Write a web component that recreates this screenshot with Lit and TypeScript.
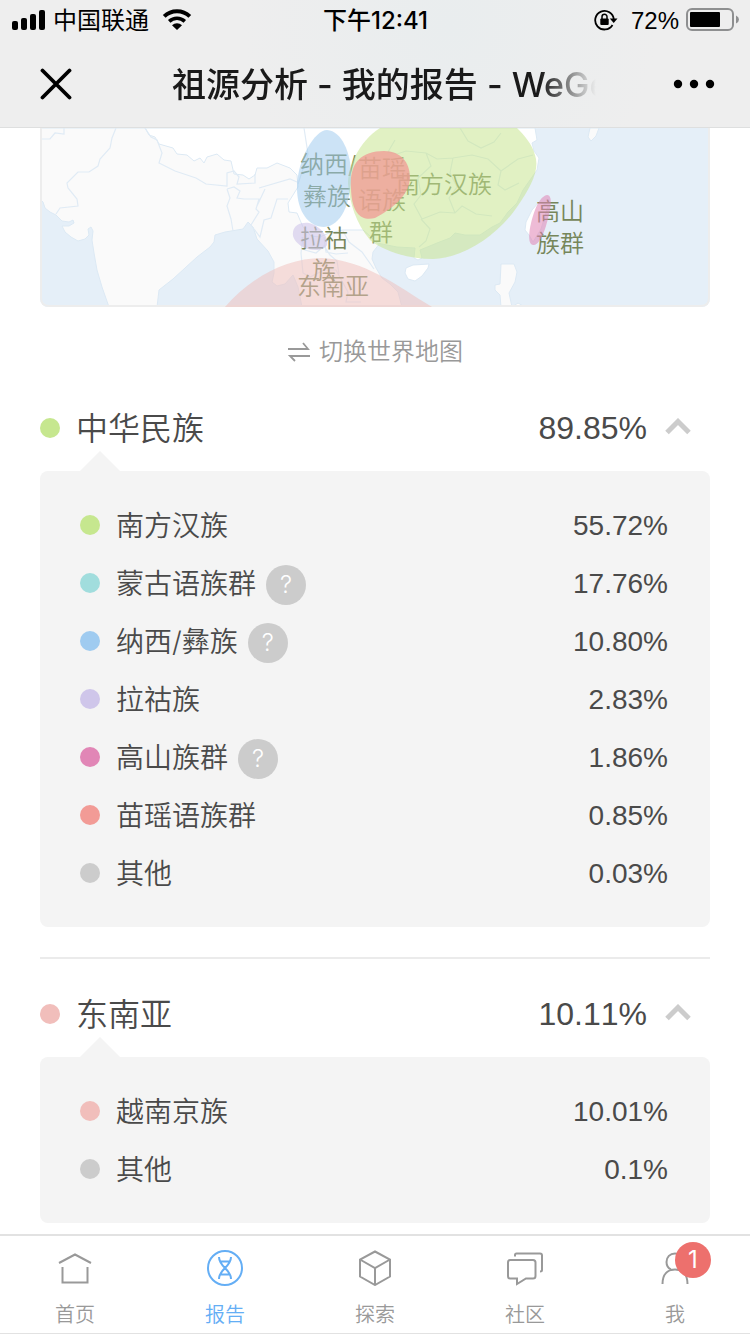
import { LitElement, html, css, svg, nothing } from "lit";
import { customElement, property, state } from "lit/decorators.js";
import { classMap } from "lit/directives/class-map.js";

interface Item {
  name: string;
  value: string;
  tone: string;
  help?: boolean;
}

interface Group {
  name: string;
  value: string;
  tone: string;
  items: Item[];
}

const GROUPS: Group[] = [
  {
    name: "中华民族",
    value: "89.85%",
    tone: "green",
    items: [
      { name: "南方汉族", value: "55.72%", tone: "green" },
      { name: "蒙古语族群", value: "17.76%", tone: "teal", help: true },
      { name: "纳西/彝族", value: "10.80%", tone: "blue", help: true },
      { name: "拉祜族", value: "2.83%", tone: "violet" },
      { name: "高山族群", value: "1.86%", tone: "magenta", help: true },
      { name: "苗瑶语族群", value: "0.85%", tone: "red" },
      { name: "其他", value: "0.03%", tone: "grey" },
    ],
  },
  {
    name: "东南亚",
    value: "10.11%",
    tone: "pink",
    items: [
      { name: "越南京族", value: "10.01%", tone: "pink" },
      { name: "其他", value: "0.1%", tone: "grey" },
    ],
  },
];

@customElement("status-bar")
class StatusBar extends LitElement {
  static styles = css`
    :host {
      display: grid;
      grid-template-columns: 1fr auto 1fr;
      align-items: center;
      height: 40px;
      padding: 0 11px 0 12px;
      color: #000;
      font-size: 24px;
      line-height: 36px;
    }
    .side {
      display: flex;
      align-items: center;
    }
    .carrier,
    .time,
    .level {
      padding-top: 2px;
    }
    .carrier {
      margin: 0 13px 0 7px;
    }
    .time {
      font-weight: 500;
    }
    .end {
      justify-content: flex-end;
    }
    .level {
      margin: 0 7px 0 13px;
      font-family: "Liberation Sans", Arial, sans-serif;
    }
    svg {
      display: block;
      flex: none;
    }
  `;

  render() {
    return html`
      <div class="side">
        <svg width="34" height="20" viewBox="0 0 34 20" aria-hidden="true">
          <rect x="0" y="11" width="6" height="9" rx="2" />
          <rect x="9" y="8" width="6" height="12" rx="2" />
          <rect x="18" y="4" width="6" height="16" rx="2" />
          <rect x="27" y="0" width="6" height="20" rx="2" />
        </svg>
        <span class="carrier">中国联通</span>
        <svg width="30" height="22" viewBox="0 0 30 22" aria-hidden="true">
          <path d="M2.2 7.4A18.4 18.4 0 0 1 27.8 7.4" fill="none" stroke="#000" stroke-width="4" />
          <path d="M7.2 12.4A11.4 11.4 0 0 1 22.8 12.4" fill="none" stroke="#000" stroke-width="3.6" />
          <path d="M10 16.3A7.2 7.2 0 0 1 20 16.3L15 21Z" />
        </svg>
      </div>
      <span class="time">下午12:41</span>
      <div class="side end">
        <svg width="24" height="22" viewBox="0 0 24 22" aria-hidden="true">
          <path d="M18.5 16A9.300 9.300 0 1 1 19.8 10.5" fill="none" stroke="#000" stroke-width="1.800" />
          <path d="M15.8 9.500H23.500L19.7 14Z" />
          <rect x="6.300" y="9.500" width="8.400" height="6.500" rx="1" />
          <path d="M8 10V7.800a2.500 2.500 0 0 1 5 0V10" fill="none" stroke="#000" stroke-width="1.500" />
        </svg>
        <span class="level">72%</span>
        <svg width="53" height="24" viewBox="0 0 53 24" aria-hidden="true">
          <rect x="1" y="1" width="46" height="21" rx="5" fill="none" stroke="#8e8f90" stroke-width="2" />
          <rect x="4" y="4" width="30" height="15" rx="1" />
          <path d="M50 7.500q3 1.500 3 4t-3 4z" fill="#8e8f90" />
        </svg>
      </div>
    `;
  }
}

@customElement("region-map")
class RegionMap extends LitElement {
  static styles = css`
    :host {
      display: block;
      overflow: hidden;
      border-radius: 0 0 8px 8px;
    }
    svg {
      display: block;
      width: 100%;
    }
    .sea {
      fill: #e5eff8;
    }
    .land {
      fill: #fafafa;
      stroke: #dce9f4;
      stroke-width: 1;
    }
    .home {
      fill: #fff;
      stroke: #dce9f4;
      stroke-width: 1;
    }
    .line {
      fill: none;
      stroke: #e0ebf5;
      stroke-width: 1.2;
    }
    .label {
      font-size: 24px;
      font-weight: 350;
      fill: #76865a;
    }
    .frame {
      fill: none;
      stroke: #ededed;
      stroke-width: 2;
    }
    .han {
      fill: #c6e58e;
      fill-opacity: 0.53;
    }
    .naxi {
      fill: #9fcbee;
      fill-opacity: 0.53;
    }
    .miao {
      fill: #f19a94;
      fill-opacity: 0.76;
    }
    .lahu {
      fill: #cfc5e9;
      fill-opacity: 0.6;
    }
    .sea-asia {
      fill: #efbdba;
      fill-opacity: 0.5;
    }
    .gaoshan {
      fill: #e084b4;
      fill-opacity: 0.55;
    }
  `;

  private label(x: number, y: number, text: string) {
    return svg`<text class="label" x=${x} y=${y}>${text}</text>`;
  }

  render() {
    return html`
      <svg viewBox="0 0 670 179" role="img" aria-label="祖源分布">
        <rect class="sea" width="670" height="179" />
        <path
          class="land"
          d="M0 0V71L3 74 5 80 10 84 16 87 22 93 29 94 33 92 34 95 29 98 22 98 25 104 31 109 38 113 45 111 49 107 48 101 51 99 53 103 52 112 54 125 57 142 62 159 69 179H117L119 162 124 158 133 151 145 140 157 129 170 119 174 114 175 107 185 104 203 101 208 94 213 99 217 111 228 123 234 134 234 145 232 154 237 158 245 156 253 147 258 159 262 179H362L358 164 350 156 342 150 336 140 332 131 333 124 340 115 338 100 318 0Z"
        />
        <path
          class="home"
          d="M105 0 109 7 115 9 119 16 133 20 137 26 147 27 154 33 160 30 164 35 167 29 177 26 184 32 191 33 194 46 203 47 209 51 215 47 217 40 227 40 237 35 250 40 257 47 258 59 248 75 249 84 257 85 263 99 271 108 280 109 289 105 303 102 323 102 330 108 337 115 357 119 375 120 374 130 378 132 382 130 380 122 397 115 410 110 415 105 425 107 440 107 452 99 460 95 468 84 477 75 483 62 490 52 497 42 499 30 494 23 492 15 497 12 495 0Z"
        />
        <path
          class="line"
          d="M0 11H10L15 5 24 6V0M76 0 72 10 70 20 60 31 58 38 49 44H38L27 55 28 60 37 71 38 78 20 80 16 86M105 0 111 9 117 12 122 25 119 35 135 43 156 50 166 56 187 58 187 45 194 43 199 49 197 56 215 55V46M187 61 194 59 200 63 197 70 204 71H219L216 81 219 84 211 97 220 109 224 92 231 90 237 71H248M187 61 190 70 187 78 191 91 193 103M219 60 250 51 257 54M225 61 217 78M262 109 265 122 276 125 284 118 290 127 297 133 299 146M263 109 261 125 263 145 270 149 284 142 296 142 308 164M303 103 309 114 322 124 334 141M284 109 286 124 296 126 308 125M308 164 306 174H321"
        />
        <path class="line" d="M264 0 268 26 258 56M355 12 348 24 357 26 366 23 386 25 397 31 413 30 432 27 448 31 461 43 478 31 493 27M386 25 391 38 378 50 381 67 374 76 382 91 400 84 415 85 422 78 436 86 452 88M413 30 410 45 417 59 409 70 415 85M420 0 428 13 441 20 454 14 461 5M461 43 458 57 465 62 479 55M381 91 390 101 386 113 379 119" />
        <path class="home" d="M365 145 366 140 373 137 389 136 388 140 382 148 375 153 368 151Z" />
        <path class="home" d="M499 74 492 82 486 94 485 102 489 107 493 114 501 101 508 78Z" />
        <path class="land" d="M461 136H474L477 144 475 154 469 165 472 179H461L460 167 455 162V157L460 156Z" />
        <path class="land" d="M472 179 478 175 485 179ZM559 0 556 8 551 13 548 9 550 0Z" />
        <path class="frame" d="M1 0V170Q1 178 9 178H661Q669 178 669 170V0" />
        ${this.label(260, 45, "纳西/")} ${this.label(263, 77, "彝族")}
        ${this.label(318, 49, "苗瑶")} ${this.label(318, 81, "语族")}
        ${this.label(329, 113, "群")} ${this.label(260, 119, "拉祜")}
        ${this.label(272, 151, "族")} ${this.label(257, 167, "东南亚")}
        ${this.label(356, 65, "南方汉族")} ${this.label(496, 92, "高山")}
        ${this.label(496, 124, "族群")}
        <path class="han" d="M340 0C318 14 308 40 308 56C310 76 316 95 330 112C345 124 370 131 393 131C424 130 458 107 477 79C491 59 500 42 495 27C492 16 485 8 477 0Z" />
        <path class="miao" d="M311 61C309 34 322 23 344 23C361 23 370 35 370 49C370 67 352 81 335 90C323 93 312 88 311 61Z" />
        <path class="naxi" d="M287 2C275 2 257 31 257 60C257 84 269 99 284 99C301 98 311 76 311 46C311 26 302 3 287 2Z" />
        <path class="lahu" d="M253 104C254 97 261 94 269 95C279 97 289 108 287 117C283 124 269 123 261 118C256 114 252 110 253 104Z" />
        <path class="sea-asia" d="M185 179C211 149 247 130 282 130C324 132 356 157 392 179Z" />
        <path class="gaoshan" d="M507 67C514 67 510 85 506 98C502 111 497 118 493 117C486 116 490 95 495 82C498 74 502 68 507 67Z" />
      </svg>
    `;
  }
}

@customElement("result-group")
class ResultGroup extends LitElement {
  @property({ attribute: false }) group!: Group;
  @state() private open = true;

  static styles = css`
    :host {
      display: block;
      padding: 12px 0 30px;
      color: #4a4a4a;
    }
    .head {
      display: flex;
      align-items: center;
      width: 100%;
      height: 86px;
      padding: 0 19px 0 0;
      border: 0;
      background: none;
      color: inherit;
      font: inherit;
      font-size: 32px;
      line-height: 48px;
      text-align: left;
      cursor: pointer;
    }
    .name {
      margin-left: 16px;
      padding-top: 2px;
      font-weight: 350;
    }
    .value {
      margin-left: auto;
      font-family: "Liberation Sans", Arial, sans-serif;
      font-kerning: none;
    }
    .chevron {
      margin: 0 0 4px 18px;
    }
    .closed .chevron {
      transform: rotate(180deg);
    }
    .dot {
      flex: none;
      width: 20px;
      height: 20px;
      border-radius: 50%;
    }
    .green { background: #c6e78f; }
    .teal { background: #a1dddd; }
    .blue { background: #9fcbf0; }
    .violet { background: #cfc6ea; }
    .magenta { background: #e186b6; }
    .red { background: #f29b96; }
    .pink { background: #f1bebb; }
    .grey { background: #ccc; }
    .panel {
      position: relative;
      margin: 0;
      padding: 25px 42px 25px 40px;
      border-radius: 8px;
      background: #f4f4f4;
      list-style: none;
    }
    .panel::before {
      content: "";
      position: absolute;
      left: 40px;
      bottom: 100%;
      border: solid transparent;
      border-width: 0 20px 20px;
      border-bottom-color: #f4f4f4;
    }
    .row {
      display: flex;
      align-items: center;
      height: 58px;
      font-size: 28px;
      line-height: 40px;
    }
    .row .value {
      padding-top: 2px;
    }
    .help {
      width: 40px;
      height: 40px;
      margin: 4px 0 0 10px;
      padding: 0;
      border: 0;
      border-radius: 50%;
      background: #ccc;
      color: #fff;
      font: inherit;
      font-size: 24px;
      font-weight: 300;
      line-height: 40px;
      cursor: pointer;
    }
  `;

  render() {
    const g = this.group;
    return html`
      <button
        class=${classMap({ head: true, closed: !this.open })}
        aria-expanded=${this.open}
        @click=${() => (this.open = !this.open)}
      >
        <span class="dot ${g.tone}"></span>
        <span class="name">${g.name}</span>
        <span class="value">${g.value}</span>
        <svg class="chevron" width="26" height="17" viewBox="0 0 26 17" aria-hidden="true">
          <path d="M2 14.5 13 3.5 24 14.5" fill="none" stroke="#ccc" stroke-width="5" />
        </svg>
      </button>
      ${this.open
        ? html`<ul class="panel">
            ${g.items.map(
              (item) => html`<li class="row">
                <span class="dot ${item.tone}"></span>
                <span class="name">${item.name}</span>
                ${item.help ? html`<button class="help" aria-label="${item.name}说明">?</button>` : nothing}
                <span class="value">${item.value}</span>
              </li>`
            )}
          </ul>`
        : nothing}
    `;
  }
}

const TABS = [
  {
    name: "首页",
    icon: svg`<path d="M3 13 19 4.500 35 13M6.500 17V32.500H31.500V17" />`,
  },
  {
    name: "报告",
    active: true,
    icon: svg`<circle cx="19" cy="18" r="17" /><path d="M13 7C13 17 25 19 25 29M25 7C25 17 13 19 13 29M14 11.500H24M14 24.500H24" />`,
  },
  {
    name: "探索",
    icon: svg`<path d="M19 1.500 34 9.500V26.500L19 35 4 26.500V9.500ZM4 9.500 19 18 34 9.500M19 18V35" />`,
  },
  {
    name: "社区",
    icon: svg`<path d="M9 6.500V5Q9 3.500 10.500 3.500H34Q36 3.500 36 5.500V20Q36 21.500 34 21.500M4 10H27Q29.500 10 29.500 12.500V26Q29.500 28.500 27 28.500H20L11 34V28.500H4Q2 28.500 2 26V12.500Q2 10 4 10Z" />`,
  },
  {
    name: "我",
    badge: "1",
    icon: svg`<path d="M6.500 34C6.500 24 12 19.500 19 19.500S31.500 24 31.500 34M15 19.500C12 18 10.500 15 10.500 12C10.500 7 14 3.500 19 3.500S27.500 7 27.500 12C27.500 15 26 18 23 19.500" />`,
  },
];

@customElement("tab-bar")
class TabBar extends LitElement {
  static styles = css`
    :host {
      display: block;
      border-top: 2px solid #e2e2e2;
      border-bottom: 1px solid #e2e2e2;
      background: #fff;
    }
    .tabs {
      display: grid;
      grid-template-columns: repeat(5, 1fr);
    }
    .tab {
      display: flex;
      flex-direction: column;
      align-items: center;
      gap: 14px;
      padding: 14px 0 3px;
      color: #999;
      font-size: 20px;
      font-weight: 350;
      line-height: 30px;
      text-decoration: none;
    }
    .active {
      color: #64aef5;
    }
    .icon {
      position: relative;
      display: block;
      height: 36px;
    }
    .icon svg {
      display: block;
      fill: none;
      stroke: currentColor;
      stroke-width: 2;
    }
    .badge {
      position: absolute;
      left: 19px;
      top: -8px;
      width: 36px;
      height: 36px;
      border-radius: 50%;
      background: #ed706d;
      color: #fff;
      font-size: 24px;
      font-weight: 400;
      line-height: 36px;
      text-align: center;
    }
  `;

  render() {
    return html`<nav class="tabs">
      ${TABS.map(
        (t) => html`<a href="#" class=${classMap({ tab: true, active: !!t.active })}>
          <span class="icon">
            <svg width="38" height="36" viewBox="0 0 38 36" aria-hidden="true">${t.icon}</svg>
            ${t.badge ? html`<span class="badge">${t.badge}</span>` : nothing}
          </span>
          <span>${t.name}</span>
        </a>`
      )}
    </nav>`;
  }
}

@customElement("app-root")
export class AppRoot extends LitElement {
  static styles = css`
    :host {
      display: flex;
      flex-direction: column;
      min-height: 100vh;
      background: #fff;
      font-family: Inter, "Noto Sans CJK SC", sans-serif;
    }
    .header {
      position: sticky;
      top: 0;
      z-index: 1;
      border-bottom: 1px solid #dedfdf;
      background: radial-gradient(circle at 60% 20%, #e9edee, #eeeeee 45%);
    }
    .bar {
      display: flex;
      align-items: center;
      height: 87px;
      padding: 0 35px 0 40px;
    }
    .icon-button {
      display: flex;
      flex: none;
      padding: 0;
      border: 0;
      background: none;
      cursor: pointer;
    }
    .title {
      flex: 1;
      margin: 0 77px 0 100px;
      padding-top: 3px;
      overflow: hidden;
      color: #1a1a1a;
      font-size: 34px;
      font-weight: 500;
      line-height: 48px;
      white-space: nowrap;
      -webkit-mask-image: linear-gradient(to left, transparent, #000 56px);
      mask-image: linear-gradient(to left, transparent, #000 56px);
    }
    .content {
      flex: 1;
      padding: 0 40px;
    }
    .switch {
      display: flex;
      align-items: center;
      justify-content: center;
      gap: 8px;
      width: 100%;
      height: 66px;
      padding: 24px 0 0;
      border: 0;
      background: none;
      color: #999;
      font: inherit;
      font-size: 24px;
      font-weight: 350;
      line-height: 36px;
      cursor: pointer;
    }
    .divided {
      border-top: 2px solid #ebebeb;
    }
    .footer {
      position: sticky;
      bottom: 0;
      z-index: 1;
    }
    .last {
      padding-bottom: 11px;
    }
  `;

  render() {
    return html`
      <header class="header">
        <status-bar></status-bar>
        <div class="bar">
          <button class="icon-button" aria-label="关闭">
            <svg width="32" height="32" viewBox="0 0 32 32">
              <path d="M2.5 2.5 29.5 29.5M29.5 2.5 2.5 29.5" stroke="#000" stroke-width="3.800" stroke-linecap="round" />
            </svg>
          </button>
          <div class="title">祖源分析 - 我的报告 - WeGene</div>
          <button class="icon-button" aria-label="更多">
            <svg width="42" height="10" viewBox="0 0 42 10">
              <circle cx="5" cy="5" r="4.200" />
              <circle cx="21" cy="5" r="4.200" />
              <circle cx="37" cy="5" r="4.200" />
            </svg>
          </button>
        </div>
      </header>
      <main class="content">
        <region-map></region-map>
        <button class="switch">
          <svg width="24" height="20" viewBox="0 0 24 20" fill="none" stroke="#999" stroke-width="1.800" aria-hidden="true">
            <path d="M1 7H21L16 1M23 14H3L8 19" />
          </svg>
          <span>切换世界地图</span>
        </button>
        ${GROUPS.map(
          (g, i) => html`<result-group
            class=${classMap({ divided: i > 0, last: i === GROUPS.length - 1 })}
            .group=${g}
          ></result-group>`
        )}
      </main>
      <tab-bar class="footer"></tab-bar>
    `;
  }
}
